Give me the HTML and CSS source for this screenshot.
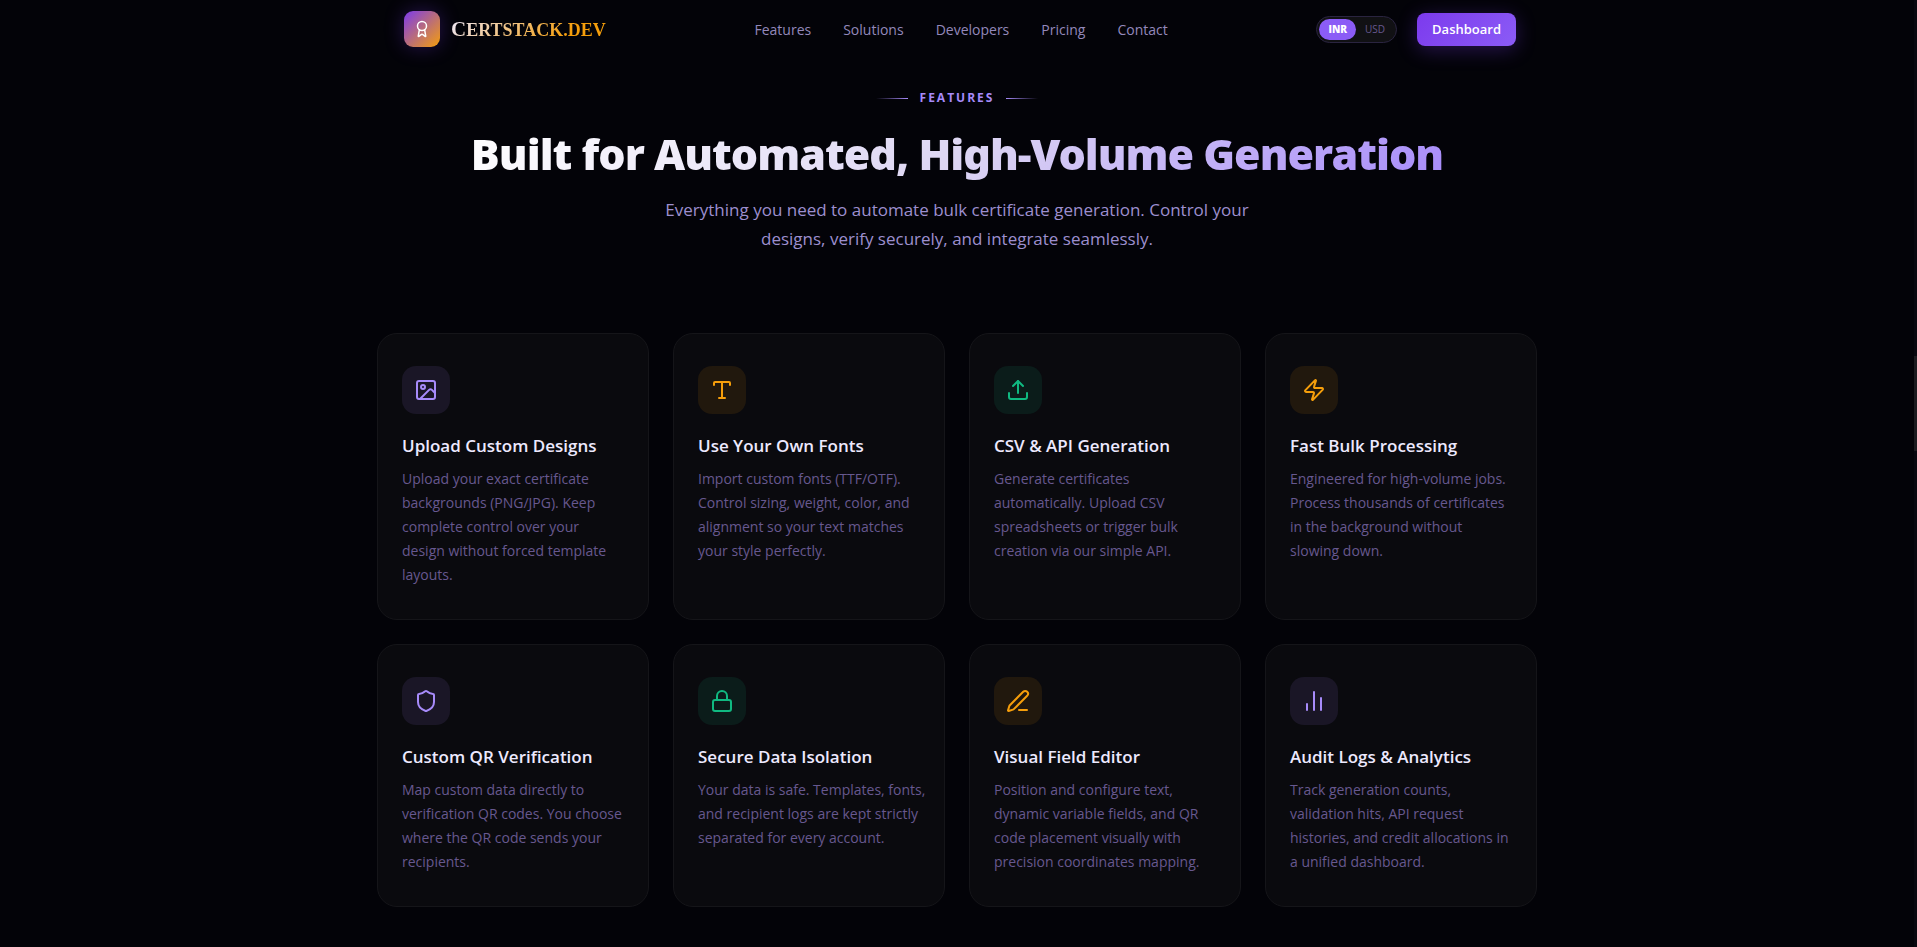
FILE: index.html
```html
<!DOCTYPE html>
<html lang="en">
<head>
<meta charset="UTF-8" />
<meta name="viewport" content="width=device-width, initial-scale=1.0" />
<title>Certstack.dev - Features</title>
<link rel="stylesheet" href="styles.css">
</head>
<body>

<!-- top nav -->
<header class="header">
  <div class="header-inner">
    <a class="brand" href="#">
      <span class="brand-mark">
        <svg viewBox="0 0 24 24"><path d="m15.477 12.89 1.515 8.526a.5.5 0 0 1-.81.47l-3.58-2.687a1 1 0 0 0-1.197 0l-3.586 2.686a.5.5 0 0 1-.81-.469l1.514-8.526"/><circle cx="12" cy="8" r="6"/></svg>
      </span>
      <span class="brand-name">Certstack.dev</span>
    </a>

    <nav class="nav">
      <a href="#features">Features</a>
      <a href="#solutions">Solutions</a>
      <a href="#developers">Developers</a>
      <a href="#pricing">Pricing</a>
      <a href="#contact">Contact</a>
    </nav>

    <div class="header-actions">
      <div class="currency">
        <button class="currency-btn active" type="button">INR</button>
        <button class="currency-btn" type="button">USD</button>
      </div>
      <button class="dashboard-btn" type="button">Dashboard</button>
    </div>
  </div>
</header>

<!-- features -->
<main class="features" id="features">
  <div class="section-head">
    <p class="eyebrow">Features</p>
    <h2 class="section-title">Built for Automated, High-Volume Generation</h2>
    <p class="section-sub">Everything you need to automate bulk certificate generation. Control your<br>designs, verify securely, and integrate seamlessly.</p>
  </div>

  <div class="grid">
    <article class="card">
      <div class="icon violet">
        <svg viewBox="0 0 24 24"><rect x="3" y="3" width="18" height="18" rx="2"/><circle cx="9" cy="9" r="2"/><path d="m21 15-3.086-3.086a2 2 0 0 0-2.828 0L6 21"/></svg>
      </div>
      <h3>Upload Custom Designs</h3>
      <p>Upload your exact certificate<br>backgrounds (PNG/JPG). Keep<br>complete control over your<br>design without forced template<br>layouts.</p>
    </article>

    <article class="card">
      <div class="icon amber">
        <svg viewBox="0 0 24 24"><path d="M12 4v16"/><path d="M4 7V5a1 1 0 0 1 1-1h14a1 1 0 0 1 1 1v2"/><path d="M9 20h6"/></svg>
      </div>
      <h3>Use Your Own Fonts</h3>
      <p>Import custom fonts (TTF/OTF).<br>Control sizing, weight, color, and<br>alignment so your text matches<br>your style perfectly.</p>
    </article>

    <article class="card">
      <div class="icon green">
        <svg viewBox="0 0 24 24"><path d="M12 3v12"/><path d="m17 8-5-5-5 5"/><path d="M21 15v4a2 2 0 0 1-2 2H5a2 2 0 0 1-2-2v-4"/></svg>
      </div>
      <h3>CSV &amp; API Generation</h3>
      <p>Generate certificates<br>automatically. Upload CSV<br>spreadsheets or trigger bulk<br>creation via our simple API.</p>
    </article>

    <article class="card">
      <div class="icon amber">
        <svg viewBox="0 0 24 24"><path d="M4 14a1 1 0 0 1-.78-1.63l9.9-10.2a.5.5 0 0 1 .86.46l-1.92 6.02A1 1 0 0 0 13 10h7a1 1 0 0 1 .78 1.63l-9.9 10.2a.5.5 0 0 1-.86-.46l1.92-6.02A1 1 0 0 0 11 14z"/></svg>
      </div>
      <h3>Fast Bulk Processing</h3>
      <p>Engineered for high-volume jobs.<br>Process thousands of certificates<br>in the background without<br>slowing down.</p>
    </article>

    <article class="card">
      <div class="icon violet">
        <svg viewBox="0 0 24 24"><path d="M20 13c0 5-3.5 7.5-7.66 8.95a1 1 0 0 1-.67-.01C7.5 20.5 4 18 4 13V6a1 1 0 0 1 1-1c2 0 4.5-1.2 6.24-2.72a1.17 1.17 0 0 1 1.52 0C14.51 3.81 17 5 19 5a1 1 0 0 1 1 1z"/></svg>
      </div>
      <h3>Custom QR Verification</h3>
      <p>Map custom data directly to<br>verification QR codes. You choose<br>where the QR code sends your<br>recipients.</p>
    </article>

    <article class="card">
      <div class="icon green">
        <svg viewBox="0 0 24 24"><rect x="3" y="11" width="18" height="11" rx="2"/><path d="M7 11V7a5 5 0 0 1 10 0v4"/></svg>
      </div>
      <h3>Secure Data Isolation</h3>
      <p>Your data is safe. Templates, fonts,<br>and recipient logs are kept strictly<br>separated for every account.</p>
    </article>

    <article class="card">
      <div class="icon amber">
        <svg viewBox="0 0 24 24"><path d="M13 21h8"/><path d="M21.174 6.812a1 1 0 0 0-3.986-3.987L3.842 16.174a2 2 0 0 0-.5.83l-1.321 4.352a.5.5 0 0 0 .623.622l4.353-1.32a2 2 0 0 0 .83-.497z"/></svg>
      </div>
      <h3>Visual Field Editor</h3>
      <p>Position and configure text,<br>dynamic variable fields, and QR<br>code placement visually with<br>precision coordinates mapping.</p>
    </article>

    <article class="card">
      <div class="icon violet">
        <svg viewBox="0 0 24 24"><path d="M5 21v-6"/><path d="M12 21V3"/><path d="M19 21V9"/></svg>
      </div>
      <h3>Audit Logs &amp; Analytics</h3>
      <p>Track generation counts,<br>validation hits, API request<br>histories, and credit allocations in<br>a unified dashboard.</p>
    </article>
  </div>
</main>

<div class="scroll-track"><div class="scroll-thumb"></div></div>

</body>
</html>
```
FILE: styles.css
```css
:root{
  --bg:        #030308;
  --card:      #0a0a0e;
  --line:      #151519;
  --heading:   #ede9fe;
  --text:      #9d8fcf;
  --muted:     #67588f;
  --nav:       #9388bb;
  --violet:    #a78bfa;
  --amber:     #f59e0b;
  --green:     #10b981;
}

*{box-sizing:border-box;margin:0;padding:0}

body{
  background:var(--bg);
  color:var(--heading);
  font-family:"Open Sans", sans-serif;
  font-size:14px;
  min-height:100vh;
  padding-right:3px;
}

a{text-decoration:none;color:inherit}
button{font-family:inherit;border:none;cursor:pointer}
svg{fill:none;stroke:currentColor;stroke-width:2;stroke-linecap:round;stroke-linejoin:round}

/* header */
.header{padding-left:6px}
.header-inner{
  max-width:1160px;height:58px;
  margin:0 auto;padding:0 24px;
  display:flex;align-items:center;justify-content:space-between;
}
.brand{display:flex;align-items:center;gap:11px}
.brand-mark{
  width:36px;height:36px;border-radius:9px;
  display:flex;align-items:center;justify-content:center;
  background:linear-gradient(135deg,#7c3aed,#f59e0b);
  box-shadow:0 0 20px rgba(124,58,237,.3);
  color:#fff;
}
.brand-mark svg{width:18px;height:18px}
.brand-name{
  display:block;
  font-family:"Liberation Serif", serif;
  font-size:18px;font-weight:700;line-height:24px;
  text-transform:uppercase;
  background:linear-gradient(135deg,#ede9fe,#f59e0b 75%);
  -webkit-background-clip:text;background-clip:text;
  color:transparent;
}
.brand-name::first-letter{font-size:21px}

.nav{display:flex;gap:32px;color:var(--nav)}

.header-actions{display:flex;align-items:center;gap:20px}
.currency{
  display:flex;
  padding:2px;border:1px solid #2a2440;border-radius:14px;
  background:#111114;
}
.currency-btn{
  height:21px;padding:0 9px;border-radius:11px;
  background:transparent;color:var(--muted);
  font-size:10px;font-weight:500;
}
.currency-btn.active{background:#8b5cf6;color:#fff;font-weight:800}
.dashboard-btn{
  height:33px;padding:0 15px;border-radius:8px;
  background:linear-gradient(135deg,#7c3aed,#8b5cf6);
  box-shadow:0 4px 20px rgba(124,58,237,.3);
  color:#fff;font-size:13px;font-weight:600;
}

/* section heading */
.features{max-width:1160px;margin:0 auto;padding:30px 0 40px}
.section-head{text-align:center;margin-bottom:80px}
.eyebrow{
  display:flex;align-items:center;justify-content:center;gap:12px;
  color:var(--violet);
  font-size:12px;font-weight:700;line-height:20px;letter-spacing:2px;
  text-transform:uppercase;
}
.eyebrow::before,.eyebrow::after{content:"";width:32px;height:1px}
.eyebrow::before{background:linear-gradient(90deg,transparent,var(--violet))}
.eyebrow::after{background:linear-gradient(90deg,var(--violet),transparent)}
.section-title{
  width:fit-content;
  margin:18px auto 13px;
  font-family:"Noto Sans", sans-serif;
  font-size:43px;font-weight:900;line-height:56px;letter-spacing:-1px;
  background:linear-gradient(135deg,#fff,#ddd6f3 50%,#a78bfa);
  -webkit-background-clip:text;background-clip:text;
  color:transparent;
}
.section-sub{color:var(--text);font-size:17px;line-height:29px}

/* feature cards */
.grid{display:grid;grid-template-columns:repeat(4,minmax(0,1fr));gap:24px}
.card{
  padding:32px 24px;
  background:var(--card);
  border:1px solid var(--line);border-radius:20px;
}
.icon{
  width:48px;height:48px;border-radius:14px;
  display:flex;align-items:center;justify-content:center;
  margin-bottom:20px;
}
.icon svg{width:24px;height:24px}
.violet{background:#1a1626;color:var(--violet)}
.amber{background:#21180d;color:var(--amber)}
.green{background:#0b1c1a;color:var(--green)}
.card h3{font-size:17px;font-weight:600;line-height:23px;margin-bottom:10px}
.card p{color:var(--muted);line-height:24px;white-space:nowrap}

/* page scroll position */
.scroll-track{position:fixed;top:0;right:0;bottom:0;width:3px;background:#08080f}
.scroll-thumb{height:10%;margin-top:356px;background:#1c1c20}
```
